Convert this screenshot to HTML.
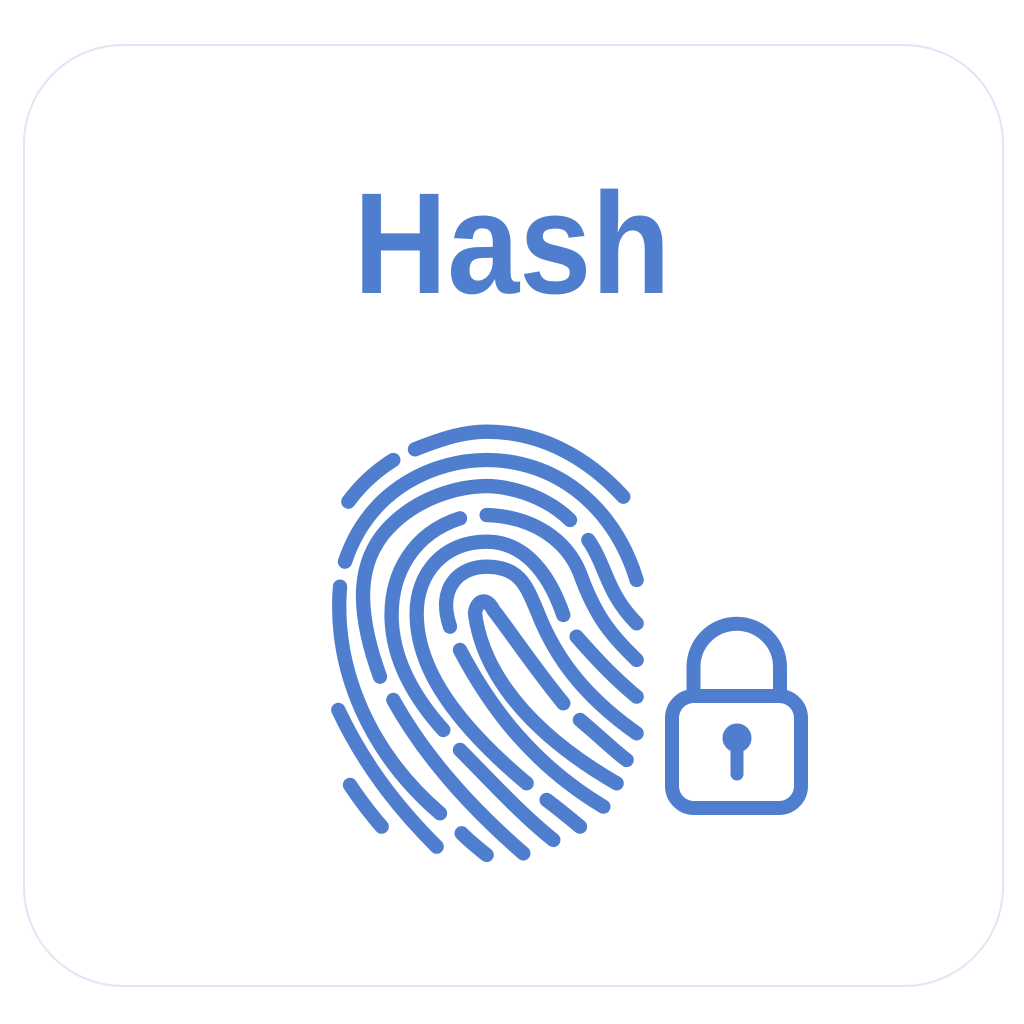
<!DOCTYPE html>
<html><head><meta charset="utf-8"><style>
html,body{margin:0;padding:0;background:#fff;width:1024px;height:1024px;overflow:hidden}
.card{position:absolute;left:23px;top:44px;width:977px;height:939px;border:2px solid #dfe6f5;border-radius:100px;background:#fff}
.t{position:absolute;left:0;width:1024px;top:172px;text-align:center;font-family:"Liberation Sans",sans-serif;font-weight:bold;font-size:144px;color:#507ecf;line-height:1}
.t span{display:inline-block;transform:scaleX(0.9)}
svg{position:absolute;left:0;top:0}
</style></head><body>
<div class="card"></div>
<div class="t"><span>Hash</span></div>
<svg width="1024" height="1024" viewBox="0 0 1024 1024">
<g fill="none" stroke="#507ecf" stroke-linecap="round" stroke-linejoin="round">
<g transform="translate(320,420) scale(0.3333)" stroke-width="43">
<path d="M285 88 C380 50 440 35 500 35 C660 35 800 110 910 230"/>
<path d="M85 245 Q140 170 220 120"/>
<path d="M75 425 C150 200 350 120 500 120 C700 120 880 250 950 480"/>
<path d="M60 500 C40 750 150 1000 360 1180"/>
<path d="M180 770 C100 550 120 420 200 330 C300 220 450 190 530 200 C620 210 700 250 750 300"/>
<path d="M420 295 C280 340 210 460 215 600 C220 720 280 830 370 930"/>
<path d="M500 285 C640 290 740 360 780 460 C830 600 880 650 950 720"/>
<path d="M805 360 C860 440 860 520 950 610"/>
<path d="M390 620 C350 500 420 440 500 440 C600 440 620 500 650 570 C700 700 780 820 950 940"/>
<path d="M730 585 C680 440 600 365 500 365 C370 365 290 460 290 580 C290 720 370 880 620 1090"/>
<path d="M730 850 C640 740 560 620 520 570 C500 530 470 540 465 580 C480 700 560 900 890 1090"/>
<path d="M420 690 C520 880 650 1040 850 1160"/>
<path d="M420 990 C520 1090 600 1180 700 1260"/>
<path d="M220 840 C320 1020 460 1170 610 1300"/>
<path d="M770 650 C840 730 890 780 950 830"/>
<path d="M780 900 C840 950 880 990 920 1020"/>
<path d="M680 1140 C720 1170 750 1195 780 1220"/>
<path d="M55 870 C130 1030 230 1160 350 1280"/>
<path d="M90 1095 C120 1140 150 1180 185 1220"/>
<path d="M425 1240 C450 1265 475 1285 500 1305"/>
</g>
<g stroke-width="14">
<rect x="672" y="696" width="129" height="112" rx="22"/>
<path d="M693.5 696 V667 A43.25 43.25 0 0 1 780 667 V696"/>
<path d="M737 740 V774" stroke-width="13"/>
</g>
<circle cx="737" cy="738" r="14" fill="#507ecf"/>
</g>
</svg>
</body></html>
